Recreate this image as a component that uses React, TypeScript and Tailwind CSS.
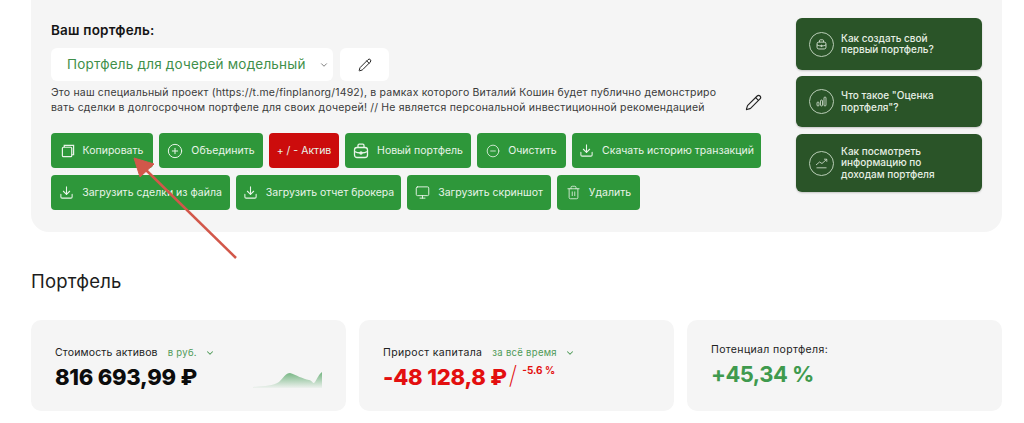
import { ChevronDown, CircleMinus, CirclePlus, Download, Monitor, Pencil, Trash2 } from "lucide-react";
import type { ReactNode } from "react";

function CopyIcon() {
  return (
    <svg width="14" height="14" viewBox="0 0 15 15" fill="none" stroke="currentColor" strokeWidth="1.3">
      <rect x="1.5" y="3.5" width="10" height="10" rx="1" />
      <path d="M3.5 3.5V1.5H13.5V11.5H11.5" />
    </svg>
  );
}

function CaseIcon({ size = 16 }: { size?: number }) {
  return (
    <svg width={size} height={size} viewBox="0 0 16 16" fill="none" stroke="currentColor" strokeWidth="1.3">
      <rect x="1.5" y="4.5" width="13" height="10" rx="2.5" />
      <path d="M5 4.5V2.5C5 1.8 5.5 1.2 6.2 1.2H9.8C10.5 1.2 11 1.8 11 2.5V4.5" />
      <path d="M1.5 8.5C4 10 6 10 8 10C10 10 12 10 14.5 8.5" />
      <circle cx="8" cy="10" r="1" />
    </svg>
  );
}

function ActionButton({ w, icon, children, red }: { w: string; icon?: ReactNode; children: ReactNode; red?: boolean }) {
  return (
    <button
      className={`${w} h-[35px] shrink-0 rounded-[4px] flex items-center justify-center gap-[8px] text-[10.5px] text-[#e9f4e9] ${red ? "bg-[#cc0c0c]" : "bg-[#2e973a]"}`}
    >
      {icon}
      <span className="whitespace-nowrap">{children}</span>
    </button>
  );
}

function HelpCard({ h, icon, lines }: { h: string; icon: ReactNode; lines: string[] }) {
  return (
    <div className={`${h} w-[186px] rounded-[6px] bg-[#2a5428] shadow-[0_1px_2px_rgba(0,0,0,0.2)] flex items-center gap-[7px] pl-[13px] text-[10px] leading-[11.5px] font-medium text-[#e6efe4]`}>
      <div className="w-[25px] h-[25px] rounded-full border border-[#b9cdb6] flex items-center justify-center text-[#dbe6d8] shrink-0">
        {icon}
      </div>
      <div>
        {lines.map((l) => (
          <div key={l} className="whitespace-nowrap">{l}</div>
        ))}
      </div>
    </div>
  );
}

export default function App() {
  const iconCls = "shrink-0";
  return (
    <div className="w-[1024px] h-[423px] overflow-hidden bg-white font-['Inter',sans-serif] relative">
      {/* top panel */}
      <div className="ml-[31px] w-[971px] h-[232px] rounded-b-[18px] bg-[#f5f5f5] pl-[20px] flex">
        <div className="w-[725px] shrink-0">
          <div className="pt-[22px] text-[13.5px] leading-[17px] font-semibold text-[#151515] tracking-[0.2px]">Ваш портфель:</div>
          <div className="mt-[9px] flex gap-[7px]">
            <div className="w-[282px] h-[33px] bg-white rounded-[6px] flex items-center pl-[16px] text-[13.5px] text-[#3f8f4a] tracking-[0.2px]">
              <span className="whitespace-nowrap">Портфель для дочерей модельный</span>
              <ChevronDown size={10} className="ml-auto mr-[4px] text-[#666]" />
            </div>
            <div className="w-[49px] h-[33px] bg-white rounded-[6px] flex items-center justify-center">
              <Pencil size={14} strokeWidth={1.7} className="text-[#222]" />
            </div>
          </div>
          <div className="mt-[4px] flex items-center">
            <div className="text-[10.5px] leading-[15px] text-[#3a3a3a] whitespace-nowrap w-[695px] tracking-[0.19px]">
              <div>Это наш специальный проект (https://t.me/finplanorg/1492), в рамках которого Виталий Кошин будет публично демонстриро</div>
              <div>вать сделки в долгосрочном портфеле для своих дочерей! // Не является персональной инвестиционной рекомендацией</div>
            </div>
            <Pencil size={17} strokeWidth={1.6} className="-ml-[1px] mt-[5px] text-[#222]" />
          </div>
          <div className="mt-[18px] flex gap-[6px]">
            <ActionButton w="w-[102px]" icon={<CopyIcon />}>Копировать</ActionButton>
            <ActionButton w="w-[104px]" icon={<CirclePlus size={16} strokeWidth={1.5} className={iconCls} />}>Объединить</ActionButton>
            <ActionButton w="w-[70px]" red>+ / - Актив</ActionButton>
            <ActionButton w="w-[126px]" icon={<CaseIcon />}>Новый портфель</ActionButton>
            <ActionButton w="w-[89px]" icon={<CircleMinus size={14} strokeWidth={1.4} className={iconCls} />}>Очистить</ActionButton>
            <ActionButton w="w-[189px]" icon={<Download size={15} strokeWidth={1.7} className={iconCls} />}>Скачать историю транзакций</ActionButton>
          </div>
          <div className="mt-[7px] flex gap-[6px]">
            <ActionButton w="w-[179px]" icon={<Download size={15} strokeWidth={1.7} className={iconCls} />}>Загрузить сделки из файла</ActionButton>
            <ActionButton w="w-[165px]" icon={<Download size={15} strokeWidth={1.7} className={iconCls} />}>Загрузить отчет брокера</ActionButton>
            <ActionButton w="w-[144px]" icon={<Monitor size={15} strokeWidth={1.5} className={iconCls} />}>Загрузить скриншот</ActionButton>
            <ActionButton w="w-[83px]" icon={<Trash2 size={15} strokeWidth={1.3} className={iconCls} />}>Удалить</ActionButton>
          </div>
        </div>
        <div className="ml-[20px] pt-[18px] flex flex-col gap-[6px]">
          <HelpCard h="h-[52px]" icon={<CaseIcon size={11} />} lines={["Как создать свой", "первый портфель?"]} />
          <HelpCard
            h="h-[51px]"
            icon={
              <svg width="11" height="11" viewBox="0 0 11 11" fill="none" stroke="currentColor" strokeWidth="0.8">
                <rect x="1" y="6" width="2" height="4" rx="1" />
                <rect x="4.5" y="4" width="2" height="6" rx="1" />
                <rect x="8" y="1" width="2" height="9" rx="1" />
              </svg>
            }
            lines={['Что такое "Оценка', 'портфеля"?']}
          />
          <HelpCard
            h="h-[58px] mt-[1px]"
            icon={
              <svg width="13" height="11" viewBox="0 0 13 11" fill="none" stroke="currentColor" strokeWidth="0.8">
                <path d="M1 7L4.5 4L7 5.5L11.5 1.5M9 1.2H11.8V3.8M1.5 9.8H11.5" />
              </svg>
            }
            lines={["Как посмотреть", "информацию по", "доходам портфеля"]}
          />
        </div>
      </div>

      {/* portfolio section */}
      <div className="ml-[31px] mt-[36px] text-[18.5px] leading-[26px] text-[#1c1c1c] tracking-[0.2px]">Портфель</div>
      <div className="ml-[31px] mt-[26px] flex gap-[13px]">
        <div className="w-[315px] h-[91px] shrink-0 rounded-[10px] bg-[#f5f5f5] pl-[24px] pt-[26px] relative">
          <div className="flex items-center text-[10.5px] leading-[13px] text-[#222] tracking-[0.15px]">
            <span>Стоимость активов</span>
            <span className="ml-[10px] text-[9.5px] text-[#4f9a58] tracking-[0.3px]">в руб.</span>
            <ChevronDown size={10} strokeWidth={2.5} className="ml-[8px] text-[#4f9a58]" />
          </div>
          <div className="mt-[4px] text-[22px] leading-[29px] font-extrabold text-[#0c0c0c] tracking-[-0.25px] whitespace-nowrap">816 693,99 ₽</div>
          <svg className="absolute left-[222px] top-[51px]" width="70" height="18" viewBox="0 0 70 18">
            <defs>
              <linearGradient id="spark" x1="0" y1="0" x2="0" y2="1">
                <stop offset="0" stopColor="#5aa86a" stopOpacity="0.85" />
                <stop offset="1" stopColor="#5aa86a" stopOpacity="0.05" />
              </linearGradient>
            </defs>
            <path d="M0 16C12 15 20 15 26 11C30 7 33 2 37 2C43 4 50 8 56 9C60 10 60 14 62 11C64 8 66 3 69 1V17H0Z" fill="url(#spark)" />
          </svg>
        </div>
        <div className="w-[315px] h-[91px] shrink-0 rounded-[10px] bg-[#f5f5f5] pl-[24px] pt-[26px]">
          <div className="flex items-center text-[10.5px] leading-[13px] text-[#222] tracking-[0.35px]">
            <span>Прирост капитала</span>
            <span className="ml-[10px] text-[9.5px] text-[#4f9a58] tracking-[0.3px]">за всё время</span>
            <ChevronDown size={10} strokeWidth={2.5} className="ml-[8px] text-[#4f9a58]" />
          </div>
          <div className="mt-[4px] flex items-start text-[#e30f0f] whitespace-nowrap">
            <span className="text-[22px] leading-[29px] font-extrabold tracking-[-0.2px]">-48 128,8 ₽</span>
            <span className="text-[25px] leading-[27px] font-extralight ml-[2px] -mt-[1px]">/</span>
            <span className="text-[10px] leading-[13px] font-bold ml-[5px] mt-[1px]">-5.6 %</span>
          </div>
        </div>
        <div className="w-[315px] h-[91px] shrink-0 rounded-[10px] bg-[#f5f5f5] pl-[24px] pt-[23px]">
          <div className="text-[10.5px] leading-[13px] text-[#222] tracking-[0.35px]">Потенциал портфеля:</div>
          <div className="mt-[4px] text-[22px] leading-[29px] font-bold text-[#3f9a4e] tracking-[-0.5px] whitespace-nowrap">+45,34 %</div>
        </div>
      </div>

      {/* annotation arrow */}
      <svg className="absolute left-0 top-0 pointer-events-none" width="1024" height="423" viewBox="0 0 1024 423">
        <path d="M236 258L146 170" stroke="#d2574a" strokeWidth="2.5" fill="none" />
        <path d="M134 158L154 164L140 177Z" fill="#d2574a" stroke="#d2574a" strokeWidth="1" strokeLinejoin="round" />
      </svg>
    </div>
  );
}
